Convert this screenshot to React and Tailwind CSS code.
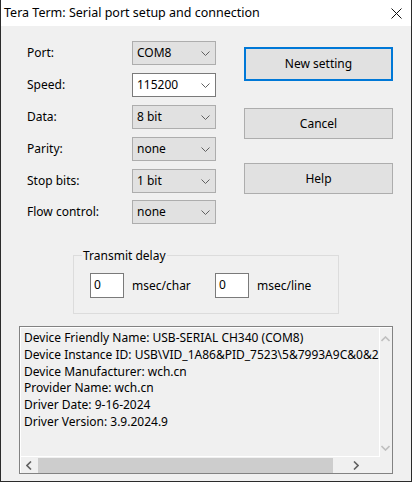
import React from "react";

const font = { fontFamily: '"Noto Sans", "Open Sans", sans-serif' };

function Chevron({ color = "#606060" }) {
  return (
    <svg width="9" height="5" viewBox="0 0 9 5" className="shrink-0">
      <path d="M0.5 0.5 L4.5 4.5 L8.5 0.5" fill="none" stroke={color} strokeWidth="1" />
    </svg>
  );
}

function Combo({ value, editable }) {
  return (
    <div
      className={`w-[84px] h-[24px] flex items-center justify-between pl-[4px] pr-[5px] border ${
        editable ? "bg-white border-[#7a7a7a]" : "bg-[#e1e1e1] border-[#adadad]"
      }`}
    >
      <span>{value}</span>
      <Chevron />
    </div>
  );
}

const rows = [
  ["Port:", "COM8", false],
  ["Speed:", "115200", true],
  ["Data:", "8 bit", false],
  ["Parity:", "none", false],
  ["Stop bits:", "1 bit", false],
  ["Flow control:", "none", false],
];

const info = [
  "Device Friendly Name: USB-SERIAL CH340 (COM8)",
  "Device Instance ID: USB\\VID_1A86&PID_7523\\5&7993A9C&0&2",
  "Device Manufacturer: wch.cn",
  "Provider Name: wch.cn",
  "Driver Date: 9-16-2024",
  "Driver Version: 3.9.2024.9",
];

export default function App() {
  return (
    <div
      className="w-[412px] h-[482px] flex flex-col border-l border-r border-b border-[#2b2b2b] text-[12px] text-black bg-[#f0f0f0]"
      style={font}
    >
      {/* Title bar */}
      <div className="h-[26px] bg-white flex items-center justify-between pl-[3px] pr-[9px] shrink-0">
        <span className="text-[12.5px]">Tera Term: Serial port setup and connection</span>
        <svg width="11" height="11" viewBox="0 0 11 11">
          <path d="M0.5 0.5 L10.5 10.5 M10.5 0.5 L0.5 10.5" stroke="#111" strokeWidth="1" />
        </svg>
      </div>

      <div className="flex-1 px-[18px] pt-[15px]">
        <div className="flex pl-[8px]">
          {/* settings */}
          <div className="flex flex-col gap-[8px]">
            {rows.map(([label, value, editable], i) => (
              <div key={label} className={`flex items-center h-[24px] ${i === 5 ? "-mt-[1px]" : ""}`}>
                <span className="w-[105px]">{label}</span>
                <Combo value={value} editable={editable} />
              </div>
            ))}
          </div>

          {/* buttons */}
          <div className="ml-[28px] pt-[6px] flex flex-col">
            <button className="w-[149px] h-[34px] bg-[#e1e1e1] border-2 border-[#0078d7]">New setting</button>
            <button className="w-[149px] h-[31px] mt-[27px] bg-[#e1e1e1] border border-[#adadad]">Cancel</button>
            <button className="w-[149px] h-[31px] mt-[24px] bg-[#e1e1e1] border border-[#adadad]">Help</button>
          </div>
        </div>

        {/* Transmit delay */}
        <div className="relative ml-[54px] mt-[31px] w-[266px] h-[59px] border border-[#dcdcdc] flex items-start pl-[16px] pt-[17px]">
          <span className="absolute -top-[9px] left-[8px] px-[1px] bg-[#f0f0f0]">Transmit delay</span>
          <div className="w-[34px] h-[25px] bg-white border border-[#7a7a7a] pl-[3px] leading-[21px]">0</div>
          <span className="w-[91px] pl-[8px] leading-[25px]">msec/char</span>
          <div className="w-[34px] h-[25px] bg-white border border-[#7a7a7a] pl-[3px] leading-[21px]">0</div>
          <span className="pl-[8px] leading-[25px]">msec/line</span>
        </div>

        {/* Device info */}
        <div className="mt-[12px] w-[374px] h-[148px] border border-[#828282]">
          <div className="h-full flex border-l border-t border-white">
            <div className="flex-1 flex flex-col">
              <div className="h-[129px] border-r border-b border-white overflow-hidden whitespace-nowrap pl-[3px] pt-[2px] leading-[16.8px]">
                {info.map((l) => (
                  <div key={l}>{l}</div>
                ))}
              </div>
              <div className="h-[16px] flex items-center">
                <div className="w-[16px] flex justify-center">
                  <svg width="6" height="9" viewBox="0 0 6 9">
                    <path d="M5 0.5 L1 4.5 L5 8.5" fill="none" stroke="#606060" strokeWidth="1.6" />
                  </svg>
                </div>
                <div className="ml-[1px] w-[295px] h-[15px] bg-[#cdcdcd]" />
                <div className="flex-1 flex justify-center">
                  <svg width="6" height="9" viewBox="0 0 6 9">
                    <path d="M1 0.5 L5 4.5 L1 8.5" fill="none" stroke="#606060" strokeWidth="1.6" />
                  </svg>
                </div>
              </div>
            </div>
            <div className="w-[20px] flex flex-col items-center justify-between pt-[8px] pb-[22px]">
              <svg width="9" height="6" viewBox="0 0 9 6">
                <path d="M0.5 5 L4.5 1 L8.5 5" fill="none" stroke="#bfbfbf" strokeWidth="1.6" />
              </svg>
              <svg width="9" height="6" viewBox="0 0 9 6">
                <path d="M0.5 1 L4.5 5 L8.5 1" fill="none" stroke="#bfbfbf" strokeWidth="1.6" />
              </svg>
            </div>
          </div>
        </div>
      </div>
    </div>
  );
}
